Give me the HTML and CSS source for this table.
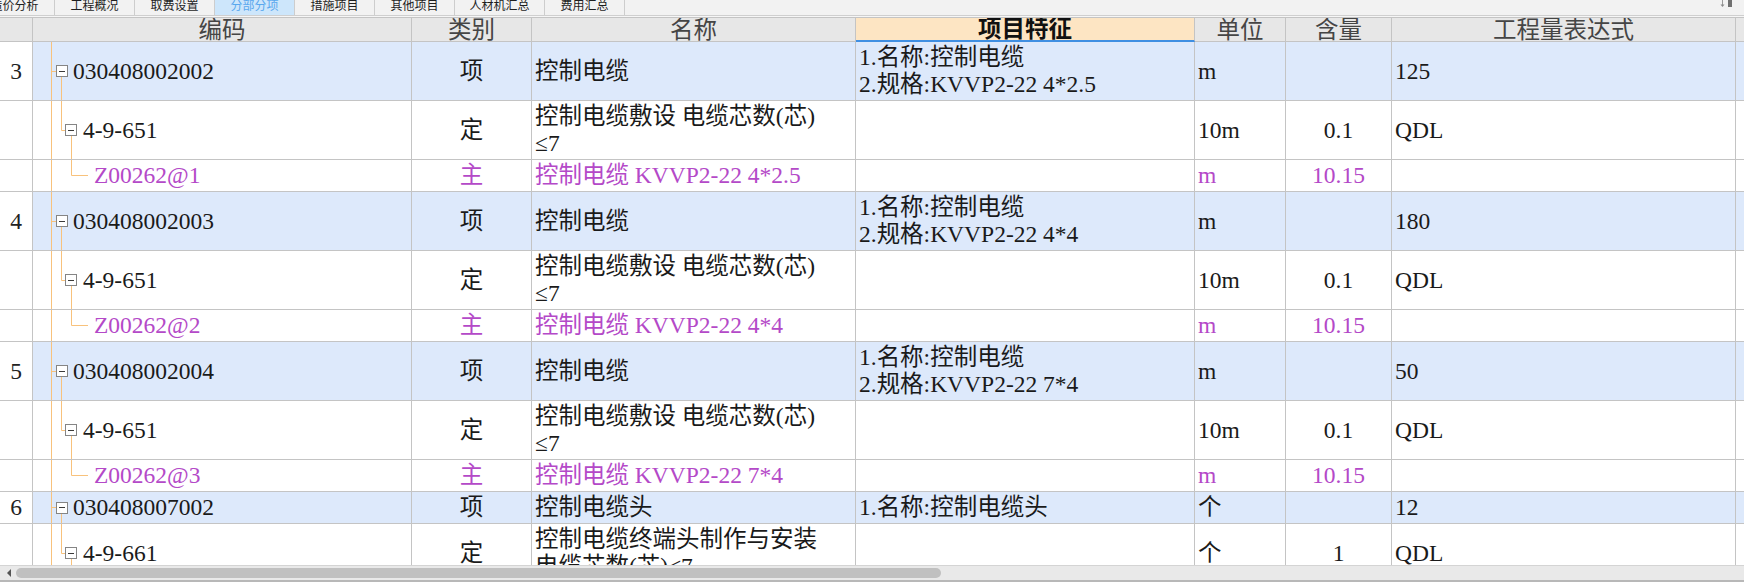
FILE: index.html
```html
<!DOCTYPE html>
<html lang="zh-CN">
<head>
<meta charset="utf-8">
<title>分部分项</title>
<link rel="stylesheet" href="styles.css">
</head>
<body>
<div class="app">
  <div class="tabbar">
    <div class="tabstrip">
      <div class="tab">造价分析</div>
      <div class="tab">工程概况</div>
      <div class="tab">取费设置</div>
      <div class="tab active">分部分项</div>
      <div class="tab">措施项目</div>
      <div class="tab">其他项目</div>
      <div class="tab wide">人材机汇总</div>
      <div class="tab">费用汇总</div>
    </div>
    <div class="corner">
      <svg width="12" height="8" viewBox="0 0 12 8"><line x1="2.5" y1="0" x2="2.5" y2="5" stroke="#9a9a9a"/><path d="M0.5 4.5 L4.5 4.5 L2.5 7 Z" fill="#8a8a8a"/><rect x="8" y="0" width="4" height="7" fill="#707070"/></svg>
    </div>
  </div>

  <div class="grid">
    <div class="row head">
      <div class="c num"></div>
      <div class="c ctr">编码</div>
      <div class="c ctr">类别</div>
      <div class="c ctr">名称</div>
      <div class="c ctr feat-head">项目特征</div>
      <div class="c ctr">单位</div>
      <div class="c ctr">含量</div>
      <div class="c ctr">工程量表达式</div>
      <div class="c end"></div>
    </div>

    <!-- 3 -->
    <div class="row item">
      <div class="c num">3</div>
      <div class="c code"><svg class="tree" width="40" height="58"><line x1="18.5" y1="0" x2="18.5" y2="58" class="ln"/><line x1="18.5" y1="29.5" x2="23" y2="29.5" class="ln"/><rect x="23.5" y="23.5" width="11" height="11" class="bx"/><line x1="26" y1="29.5" x2="32" y2="29.5" class="mn"/><line x1="28.5" y1="35" x2="28.5" y2="58" class="ln"/></svg><span>030408002002</span></div>
      <div class="c ctr">项</div>
      <div class="c txt">控制电缆</div>
      <div class="c txt">1.名称:控制电缆<br>2.规格:KVVP2-22 4*2.5</div>
      <div class="c txt">m</div>
      <div class="c ctr"></div>
      <div class="c txt">125</div>
      <div class="c end"></div>
    </div>
    <div class="row">
      <div class="c num"></div>
      <div class="c code"><svg class="tree" width="50" height="58"><line x1="18.5" y1="0" x2="18.5" y2="58" class="ln"/><line x1="28.5" y1="0" x2="28.5" y2="29.5" class="ln"/><line x1="28.5" y1="29.5" x2="32" y2="29.5" class="ln"/><rect x="32.5" y="23.5" width="11" height="11" class="bx"/><line x1="35" y1="29.5" x2="41" y2="29.5" class="mn"/><line x1="38.5" y1="35" x2="38.5" y2="58" class="ln"/></svg><span>4-9-651</span></div>
      <div class="c ctr">定</div>
      <div class="c txt">控制电缆敷设 电缆芯数(芯)<br>≤7</div>
      <div class="c txt"></div>
      <div class="c txt">10m</div>
      <div class="c ctr">0.1</div>
      <div class="c txt">QDL</div>
      <div class="c end"></div>
    </div>
    <div class="row short main">
      <div class="c num"></div>
      <div class="c code"><svg class="tree" width="61" height="31"><line x1="18.5" y1="0" x2="18.5" y2="31" class="ln"/><line x1="38.5" y1="0" x2="38.5" y2="15.5" class="ln"/><line x1="38.5" y1="15.5" x2="55" y2="15.5" class="ln"/></svg><span>Z00262@1</span></div>
      <div class="c ctr">主</div>
      <div class="c txt">控制电缆 KVVP2-22 4*2.5</div>
      <div class="c txt"></div>
      <div class="c txt">m</div>
      <div class="c ctr">10.15</div>
      <div class="c txt"></div>
      <div class="c end"></div>
    </div>

    <!-- 4 -->
    <div class="row item">
      <div class="c num">4</div>
      <div class="c code"><svg class="tree" width="40" height="58"><line x1="18.5" y1="0" x2="18.5" y2="58" class="ln"/><line x1="18.5" y1="29.5" x2="23" y2="29.5" class="ln"/><rect x="23.5" y="23.5" width="11" height="11" class="bx"/><line x1="26" y1="29.5" x2="32" y2="29.5" class="mn"/><line x1="28.5" y1="35" x2="28.5" y2="58" class="ln"/></svg><span>030408002003</span></div>
      <div class="c ctr">项</div>
      <div class="c txt">控制电缆</div>
      <div class="c txt">1.名称:控制电缆<br>2.规格:KVVP2-22 4*4</div>
      <div class="c txt">m</div>
      <div class="c ctr"></div>
      <div class="c txt">180</div>
      <div class="c end"></div>
    </div>
    <div class="row">
      <div class="c num"></div>
      <div class="c code"><svg class="tree" width="50" height="58"><line x1="18.5" y1="0" x2="18.5" y2="58" class="ln"/><line x1="28.5" y1="0" x2="28.5" y2="29.5" class="ln"/><line x1="28.5" y1="29.5" x2="32" y2="29.5" class="ln"/><rect x="32.5" y="23.5" width="11" height="11" class="bx"/><line x1="35" y1="29.5" x2="41" y2="29.5" class="mn"/><line x1="38.5" y1="35" x2="38.5" y2="58" class="ln"/></svg><span>4-9-651</span></div>
      <div class="c ctr">定</div>
      <div class="c txt">控制电缆敷设 电缆芯数(芯)<br>≤7</div>
      <div class="c txt"></div>
      <div class="c txt">10m</div>
      <div class="c ctr">0.1</div>
      <div class="c txt">QDL</div>
      <div class="c end"></div>
    </div>
    <div class="row short main">
      <div class="c num"></div>
      <div class="c code"><svg class="tree" width="61" height="31"><line x1="18.5" y1="0" x2="18.5" y2="31" class="ln"/><line x1="38.5" y1="0" x2="38.5" y2="15.5" class="ln"/><line x1="38.5" y1="15.5" x2="55" y2="15.5" class="ln"/></svg><span>Z00262@2</span></div>
      <div class="c ctr">主</div>
      <div class="c txt">控制电缆 KVVP2-22 4*4</div>
      <div class="c txt"></div>
      <div class="c txt">m</div>
      <div class="c ctr">10.15</div>
      <div class="c txt"></div>
      <div class="c end"></div>
    </div>

    <!-- 5 -->
    <div class="row item">
      <div class="c num">5</div>
      <div class="c code"><svg class="tree" width="40" height="58"><line x1="18.5" y1="0" x2="18.5" y2="58" class="ln"/><line x1="18.5" y1="29.5" x2="23" y2="29.5" class="ln"/><rect x="23.5" y="23.5" width="11" height="11" class="bx"/><line x1="26" y1="29.5" x2="32" y2="29.5" class="mn"/><line x1="28.5" y1="35" x2="28.5" y2="58" class="ln"/></svg><span>030408002004</span></div>
      <div class="c ctr">项</div>
      <div class="c txt">控制电缆</div>
      <div class="c txt">1.名称:控制电缆<br>2.规格:KVVP2-22 7*4</div>
      <div class="c txt">m</div>
      <div class="c ctr"></div>
      <div class="c txt">50</div>
      <div class="c end"></div>
    </div>
    <div class="row">
      <div class="c num"></div>
      <div class="c code"><svg class="tree" width="50" height="58"><line x1="18.5" y1="0" x2="18.5" y2="58" class="ln"/><line x1="28.5" y1="0" x2="28.5" y2="29.5" class="ln"/><line x1="28.5" y1="29.5" x2="32" y2="29.5" class="ln"/><rect x="32.5" y="23.5" width="11" height="11" class="bx"/><line x1="35" y1="29.5" x2="41" y2="29.5" class="mn"/><line x1="38.5" y1="35" x2="38.5" y2="58" class="ln"/></svg><span>4-9-651</span></div>
      <div class="c ctr">定</div>
      <div class="c txt">控制电缆敷设 电缆芯数(芯)<br>≤7</div>
      <div class="c txt"></div>
      <div class="c txt">10m</div>
      <div class="c ctr">0.1</div>
      <div class="c txt">QDL</div>
      <div class="c end"></div>
    </div>
    <div class="row short main">
      <div class="c num"></div>
      <div class="c code"><svg class="tree" width="61" height="31"><line x1="18.5" y1="0" x2="18.5" y2="31" class="ln"/><line x1="38.5" y1="0" x2="38.5" y2="15.5" class="ln"/><line x1="38.5" y1="15.5" x2="55" y2="15.5" class="ln"/></svg><span>Z00262@3</span></div>
      <div class="c ctr">主</div>
      <div class="c txt">控制电缆 KVVP2-22 7*4</div>
      <div class="c txt"></div>
      <div class="c txt">m</div>
      <div class="c ctr">10.15</div>
      <div class="c txt"></div>
      <div class="c end"></div>
    </div>

    <!-- 6 -->
    <div class="row short item">
      <div class="c num">6</div>
      <div class="c code"><svg class="tree" width="40" height="31"><line x1="18.5" y1="0" x2="18.5" y2="31" class="ln"/><line x1="18.5" y1="15.5" x2="23" y2="15.5" class="ln"/><rect x="23.5" y="10.5" width="11" height="11" class="bx"/><line x1="26" y1="15.5" x2="32" y2="15.5" class="mn"/><line x1="28.5" y1="22" x2="28.5" y2="31" class="ln"/></svg><span>030408007002</span></div>
      <div class="c ctr">项</div>
      <div class="c txt">控制电缆头</div>
      <div class="c txt">1.名称:控制电缆头</div>
      <div class="c txt">个</div>
      <div class="c ctr"></div>
      <div class="c txt">12</div>
      <div class="c end"></div>
    </div>
    <div class="row">
      <div class="c num"></div>
      <div class="c code"><svg class="tree" width="50" height="58"><line x1="18.5" y1="0" x2="18.5" y2="58" class="ln"/><line x1="28.5" y1="0" x2="28.5" y2="29.5" class="ln"/><line x1="28.5" y1="29.5" x2="32" y2="29.5" class="ln"/><rect x="32.5" y="23.5" width="11" height="11" class="bx"/><line x1="35" y1="29.5" x2="41" y2="29.5" class="mn"/><line x1="38.5" y1="35" x2="38.5" y2="58" class="ln"/></svg><span>4-9-661</span></div>
      <div class="c ctr">定</div>
      <div class="c txt">控制电缆终端头制作与安装<br>电缆芯数(芯)≤7</div>
      <div class="c txt"></div>
      <div class="c txt">个</div>
      <div class="c ctr">1</div>
      <div class="c txt">QDL</div>
      <div class="c end"></div>
    </div>
  </div>

  <div class="hscroll">
    <svg class="arrow" width="6" height="8" viewBox="0 0 6 8"><path d="M5 0 L5 8 L1 4 Z" fill="#555"/></svg>
    <div class="thumb"></div>
  </div>
</div>
</body>
</html>
```

FILE: styles.css
```css
html, body {
  margin: 0;
  padding: 0;
  background: #ffffff;
}

.app {
  width: 1744px;
  height: 582px;
  overflow: hidden;
  display: flex;
  flex-direction: column;
  background: #f6f6f6;
}

/* ---------- tabs ---------- */
.tabbar {
  height: 15px;
  flex: none;
  display: flex;
  overflow: hidden;
  background: #f2f2f2;
  border-bottom: 1px solid #cfcfcf;
  margin-bottom: 1px;
}

.tabstrip {
  display: flex;
  margin-left: -25px;
}

.tab {
  width: 80px;
  box-sizing: border-box;
  border-right: 1px solid #cdcdcd;
  font-family: "Noto Sans CJK SC", sans-serif;
  font-size: 12px;
  line-height: 9px;
  color: #1e1e1e;
  text-align: center;
}

.tab.wide {
  width: 90px;
}

.tab.active {
  background: #cde6fb;
  color: #5aa8ee;
}

.corner {
  margin-left: auto;
  padding-right: 12px;
  display: flex;
  align-items: flex-start;
}

.corner svg {
  display: block;
}

/* ---------- grid ---------- */
.grid {
  height: 548px;
  flex: none;
  overflow: hidden;
  border-top: 1px solid #c4c4c4;
  box-sizing: border-box;
  background: #ffffff;
  font-family: "Liberation Serif", "Noto Sans CJK SC", serif;
  font-size: 23.5px;
  line-height: 27px;
  color: #1a1a1a;
}

.row {
  display: grid;
  grid-template-columns: 33px 379px 120px 324px 339px 91px 106px 344px 8px;
  height: 59px;
}

.row.short {
  height: 32px;
}

.row.head {
  height: 24px;
  background: #e7e7e7;
  color: #454545;
  line-height: 22px;
}

.c {
  box-sizing: border-box;
  border-right: 1px solid #c4c4c4;
  border-bottom: 1px solid #c4c4c4;
  display: flex;
  align-items: center;
  overflow: hidden;
  white-space: nowrap;
}

.c.end {
  border-right: none;
}

.c.num {
  justify-content: center;
  background: #ffffff;
  color: #222;
}

.row.head .c.num {
  background: #e7e7e7;
}

.c.ctr {
  justify-content: center;
}

.c.txt {
  padding-left: 3px;
}

.c.code {
  align-items: stretch;
}

.c.code span {
  align-self: center;
}

.tree {
  flex: none;
  display: block;
}

.tree .ln {
  stroke: #f8c27c;
  stroke-width: 1;
}

.tree .bx {
  fill: #ffffff;
  stroke: #858585;
  stroke-width: 1;
}

.tree .mn {
  stroke: #3a3a3a;
  stroke-width: 1;
}

.feat-head {
  background: #fde5c3;
  font-weight: bold;
  color: #111;
  border-bottom: 2px solid #3f8fe2;
}

.row.item .c {
  background: #dde9fb;
}

.row.item .c.num {
  background: #ffffff;
}

.row.main {
  color: #b449c8;
}

.row.main .c.num {
  color: #222;
}

/* ---------- scrollbar ---------- */
.hscroll {
  flex: none;
  height: 17px;
  box-sizing: border-box;
  border-top: 1px solid #d4d4d4;
  border-bottom: 2px solid #b8b8b8;
  background: #e9e9e9;
  display: flex;
  align-items: center;
  padding-left: 6px;
}

.arrow {
  display: block;
  flex: none;
}

.thumb {
  margin-left: 4px;
  width: 925px;
  height: 10px;
  border-radius: 5px;
  background: #c0c0c0;
}
```
